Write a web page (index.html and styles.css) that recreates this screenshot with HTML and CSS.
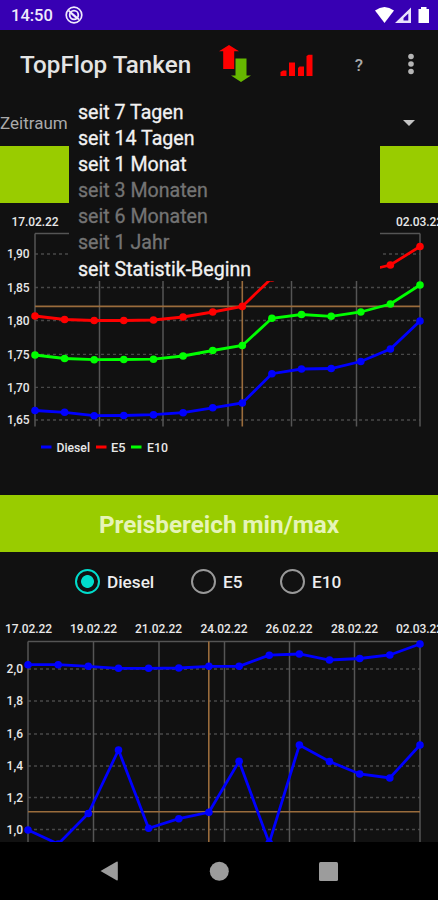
FILE: index.html
```
<!DOCTYPE html>
<html lang="de">
<head>
    <meta charset="UTF-8">
    <meta name="viewport" content="width=device-width, initial-scale=1.0">
    <title>TopFlop Tanken</title>
    <link rel="stylesheet" href="styles.css">
</head>
<body>
    <div class="status-bar">
        <span class="time">14:50</span>
        <svg class="status-icon" width="18" height="18" viewBox="0 0 18 18">
            <circle cx="9" cy="9" r="7.8" fill="none" stroke="#efeafc" stroke-width="1.7"/>
            <circle cx="9" cy="9" r="4.3" fill="none" stroke="#efeafc" stroke-width="1.8"/>
            <path d="M3.5 4.5 14 13.5M6 7l5 4.5" stroke="#efeafc" stroke-width="1.7"/>
        </svg>
        <svg class="status-right" width="56" height="18" viewBox="0 0 56 18">
            <path d="M0 4.5Q9.5-2.5 19 4.5L9.5 17Z" fill="#fff"/>
            <path fill-rule="evenodd" d="M20 17 36 1.5V17ZM28.5 14.5H33.3V7.5L28.5 12Z" fill="#e9e2fb"/>
            <path d="M43.5 3H46V1H51.5V3H54V17H43.5Z" fill="#fff"/>
        </svg>
    </div>

    <div class="app-bar">
        <h1>TopFlop Tanken</h1>
        <svg class="icon-arrows" width="32" height="38" viewBox="0 0 32 38">
            <path d="M10 0 20 6.2H15.2V24H4.2V6.2H0Z" fill="#f00"/>
            <path d="M16.5 13.5H27.5V30.5H32L22 37 12 30.5H16.5Z" fill="#66b800"/>
        </svg>
        <svg class="icon-bars" width="33" height="23" viewBox="0 0 33 23">
            <path d="M.5 18 3 16.5H6.5V22H.5ZM9 8.500H15V22H9ZM18 14 19.500 12.500H24V22H18ZM26.500 2 28.500 .7H32.500V22H26.500Z" fill="#f00"/>
        </svg>
        <span class="help">?</span>
        <svg class="icon-more" width="6" height="22" viewBox="0 0 6 22">
            <g fill="#b5b5b5"><circle cx="3" cy="3.5" r="2.8"/><circle cx="3" cy="11" r="2.8"/><circle cx="3" cy="18.5" r="2.8"/></g>
        </svg>
    </div>

    <div class="period">
        <span>Zeitraum</span>
        <span class="caret"></span>
        <ul class="dropdown">
            <li>seit 7 Tagen</li>
            <li>seit 14 Tagen</li>
            <li>seit 1 Monat</li>
            <li class="disabled">seit 3 Monaten</li>
            <li class="disabled">seit 6 Monaten</li>
            <li class="disabled">seit 1 Jahr</li>
            <li>seit Statistik-Beginn</li>
        </ul>
    </div>

    <div class="banner"></div>
    <svg class="chart" id="average" width="438" height="292" viewBox="0 203 438 292"></svg>

    <div class="banner">Preisbereich min/max</div>
    <div class="fuel">
        <label class="fuel-diesel"><i class="radio checked"></i>Diesel</label>
        <label class="fuel-e5"><i class="radio"></i>E5</label>
        <label><i class="radio"></i>E10</label>
    </div>
    <svg class="chart" id="range" width="438" height="231" viewBox="0 611 438 231"></svg>

    <div class="nav-bar">
        <svg width="438" height="58" viewBox="0 0 438 58" fill="#9c9c9c">
            <path d="M100.5 29 116.5 19.7Q117.8 19 117.8 20.5V37.5Q117.8 39 116.5 38.3Z"/>
            <circle cx="219.3" cy="29.3" r="9.5"/>
            <rect x="319" y="20" width="19" height="19" rx="1.5"/>
        </svg>
    </div>

    <script src="charts.js"></script>
</body>
</html>
```
FILE: styles.css
```
* {
    margin: 0;
    padding: 0;
    box-sizing: border-box;
}

body {
    width: 438px;
    height: 900px;
    overflow: hidden;
    background: #111;
    color: #eee;
    font-family: Roboto, sans-serif;
}

svg {
    display: block;
    flex: none;
}

.status-bar {
    height: 30px;
    padding: 0 8px 0 11px;
    background: #3700b3;
    display: flex;
    align-items: center;
}

.time {
    font-size: 16.5px;
    font-weight: 500;
    line-height: 30px;
    width: 54px;
    padding-top: 2px;
    color: #efeafc;
}

.status-right {
    margin-left: auto;
    margin-right: -1px;
}

.app-bar {
    height: 70px;
    padding-left: 20px;
    display: flex;
    align-items: center;
}

h1 {
    width: 199px;
    font-size: 24.2px;
    font-weight: 500;
    white-space: nowrap;
    color: #e4e4e4;
}

.icon-arrows {
    margin-top: -2px;
}

.icon-bars {
    margin-left: 29px;
}

.help {
    width: 16px;
    margin-left: 38px;
    text-align: center;
    font-size: 17px;
    font-weight: 500;
    color: #aaa;
}

.icon-more {
    margin-left: 41px;
    margin-top: -3px;
}

.period {
    position: relative;
    height: 46px;
    padding-right: 23px;
    display: flex;
    align-items: center;
    justify-content: space-between;
    font-size: 17px;
    color: #aaa;
}

.caret {
    border: 6px solid transparent;
    border-top-color: #c4c4c4;
    border-bottom: 0;
}

.dropdown {
    position: absolute;
    left: 69px;
    top: -7px;
    width: 310.5px;
    height: 187.5px;
    padding: 7px 9px 0;
    background: #111;
    list-style: none;
    font-size: 19.6px;
    line-height: 26.1px;
    color: #f2f2f2;
    -webkit-text-stroke: 0.3px;
}

.dropdown .disabled {
    color: #747474;
}

.banner {
    height: 57px;
    background: #9c0;
    color: #e6f4b8;
    font-size: 24.3px;
    font-weight: 700;
    line-height: 60px;
    text-align: center;
}

.fuel {
    height: 59px;
    padding-left: 75px;
    display: flex;
    align-items: center;
    font-size: 17.2px;
    font-weight: 500;
}

.fuel label {
    display: flex;
    align-items: center;
}

.fuel-diesel {
    width: 116px;
}

.fuel-e5 {
    width: 89px;
}

.radio {
    width: 25px;
    height: 25px;
    margin-right: 7px;
    border: 2.5px solid #999;
    border-radius: 50%;
}

.radio.checked {
    border-color: #0dc;
    background: radial-gradient(circle, #0dc 6px, transparent 6.8px);
}

.chart {
    font-size: 12px;
    font-weight: 500;
    fill: #e8e8e8;
}

.chart .frame {
    stroke: #555;
    stroke-width: 1.5;
}

.chart .grid {
    stroke: #484848;
    stroke-width: 1.3;
    stroke-dasharray: 3 3;
}

.chart .cross {
    stroke: #9a6c3c;
    stroke-width: 1.6;
}

.chart .series {
    fill: none;
    stroke-width: 2.8;
}

.nav-bar {
    height: 58px;
    background: #000;
}
```
FILE: charts.js
```
const BLUE = '#0000ff', RED = '#ff0000', GREEN = '#00ff00';

function line(x1, y1, x2, y2, cls) {
    return `<line class="${cls}" x1="${x1}" y1="${y1}" x2="${x2}" y2="${y2}"/>`;
}

function drawChart(id, c) {
    let out = line(c.left, c.top, 420, c.top, 'frame');
    c.rows.forEach(([label, y]) => {
        out += line(c.left, y, 420, y, 'grid');
        out += `<text x="${c.labelX}" y="${y + 4.3}" text-anchor="end" textLength="${c.labelW}">${label}</text>`;
    });
    c.cols.forEach(x => out += line(x, c.top, x, c.bottom, 'frame'));
    c.dates.forEach(([label, x]) => {
        out += `<text x="${x}" y="${c.dateY}" textLength="47">${label}</text>`;
    });
    out += line(c.left, c.cross[1], 420, c.cross[1], 'cross');
    out += line(c.cross[0], c.top, c.cross[0], c.bottom, 'cross');
    c.series.forEach(([color, values]) => {
        const step = (420 - c.left) / (values.length - 1);
        const points = values.map((y, i) => [(c.left + i * step).toFixed(1), y]);
        out += `<polyline class="series" stroke="${color}" points="${points.join(' ')}"/>`;
        points.forEach(p => out += `<circle cx="${p[0]}" cy="${p[1]}" r="3.8" fill="${color}"/>`);
    });
    (c.legend || []).forEach(([label, color, x, textX, w]) => {
        out += `<rect x="${x}" y="445.5" width="10.5" height="3" fill="${color}"/>`;
        out += `<text x="${textX}" y="451.5" textLength="${w}" lengthAdjust="spacingAndGlyphs">${label}</text>`;
    });
    document.getElementById(id).innerHTML = out;
}

drawChart('average', {
    left: 35, top: 233.5, bottom: 426.5, labelX: 29.5, labelW: 22.5, dateY: 226,
    rows: [['1,90', 254], ['1,85', 287.5], ['1,80', 320.5], ['1,75', 354.3], ['1,70', 387.3], ['1,65', 420]],
    cols: [35, 99.5, 163, 228, 291.5, 356.5, 420],
    dates: [['17.02.22', 11.5], ['02.03.22', 396]],
    cross: [242.3, 306.4],
    series: [
        [BLUE, [410.5, 412.3, 415.7, 415.5, 414.7, 412.7, 407.8, 403, 373.7, 369, 368.5, 361.5, 349, 321]],
        [RED, [316, 319.5, 320.5, 320.5, 320, 317, 312, 306.4, 278, 276, 277, 272, 265, 246.5]],
        [GREEN, [355, 358.5, 359.7, 359.5, 359.2, 356, 350.5, 345.5, 318.3, 314.5, 316.3, 312, 304, 285]]
    ],
    legend: [['Diesel', BLUE, 41, 56.5, 33.5], ['E5', RED, 96, 111, 14.5], ['E10', GREEN, 131, 147, 21]]
});

drawChart('range', {
    left: 28, top: 641.5, bottom: 842, labelX: 23, labelW: 16.5, dateY: 633,
    rows: [['2,0', 669], ['1,8', 701], ['1,6', 734], ['1,4', 766], ['1,2', 797.5], ['1,0', 829.5]],
    cols: [28, 93.5, 159, 224.5, 289.5, 354.5, 420],
    dates: [['17.02.22', 5], ['19.02.22', 70], ['21.02.22', 135], ['24.02.22', 200.5],
        ['26.02.22', 265.5], ['28.02.22', 331], ['02.03.22', 396]],
    cross: [208.8, 811.8],
    series: [
        [BLUE, [664.7, 664.7, 666.3, 668.3, 668.3, 668, 666.3, 666.3, 655.2, 654, 660, 658.5, 655, 644]],
        [BLUE, [830, 844, 813.5, 750, 828.3, 818.7, 812.3, 761.3, 843, 745, 761.5, 774, 778, 745]]
    ]
});
```
